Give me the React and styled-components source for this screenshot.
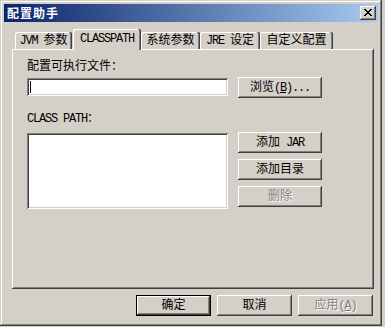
import React from "react";
import styled, { createGlobalStyle } from "styled-components";

const FACE = "#D4D0C8";
const RAISED = `inset -1px -1px #404040, inset 1px 1px #ffffff, inset -2px -2px #808080, inset 2px 2px ${FACE}`;
const SUNKEN = `inset 1px 1px #808080, inset -1px -1px #ffffff, inset 2px 2px #404040, inset -2px -2px ${FACE}`;

const Global = createGlobalStyle`
  html, body { margin: 0; padding: 0; background: ${FACE}; }
  body {
    font-family: "Liberation Mono", "Noto Sans CJK SC", monospace;
    font-size: 12px;
    color: #000;
  }
  * { box-sizing: border-box; }
`;

const Window = styled.div`
  width: 382px;
  height: 326px;
  padding: 4px;
  background: ${FACE};
  display: flex;
  flex-direction: column;
  box-shadow: inset -1px -1px #404040, inset 1px 1px ${FACE}, inset -2px -2px #808080, inset 2px 2px #ffffff;
`;

const TitleBar = styled.div`
  flex: none;
  height: 18px;
  display: flex;
  align-items: center;
  justify-content: space-between;
  padding: 0 2px 0 3px;
  background: linear-gradient(to right, #0a246a, #a6caf0);
`;

const Title = styled.span`
  color: #fff;
  font-family: "Noto Sans CJK SC", sans-serif;
  font-weight: bold;
  font-size: 12px;
  letter-spacing: 1px;
  line-height: 18px;
`;

const CloseButton = styled.div`
  width: 16px;
  height: 14px;
  background: ${FACE};
  box-shadow: ${RAISED};
  display: flex;
  align-items: center;
  justify-content: center;
  padding: 0 1px 1px 0;
`;

const Body = styled.div`
  flex: 1;
  display: flex;
  flex-direction: column;
  padding: 7px 4px 0 8px;
`;

const TabStrip = styled.div`
  flex: none;
  height: 20px;
  display: flex;
  align-items: flex-end;
  padding-left: 3px;
`;

const Tab = styled.div`
  width: ${(p) => p.$w}px;
  height: ${(p) => (p.$active ? 21 : 17)}px;
  margin-left: ${(p) => p.$ml || 0}px;
  margin-bottom: ${(p) => (p.$active ? -1 : 0)}px;
  padding-bottom: ${(p) => (p.$active ? 2 : 0)}px;
  position: relative;
  z-index: ${(p) => (p.$active ? 1 : 0)};
  background: ${FACE};
  display: flex;
  align-items: center;
  justify-content: center;
  line-height: 12px;
  white-space: pre;
  border-top-left-radius: 2px;
  border-top-right-radius: 2px;
  box-shadow: inset -1px 0 #404040, inset -2px 0 #808080, inset 1px 1px #ffffff;
`;

const Panel = styled.div`
  flex: none;
  height: 240px;
  padding: 12px 0 0 15px;
  display: flex;
  flex-direction: column;
  box-shadow: inset -1px -1px #404040, inset 1px 1px #ffffff, inset -2px -2px #808080;
`;

const Label = styled.div`
  line-height: 12px;
  height: 12px;
  margin-top: ${(p) => p.$mt || 0}px;
  white-space: pre;
`;

const Row = styled.div`
  display: flex;
  align-items: flex-start;
  gap: 10px;
  margin-top: ${(p) => p.$mt || 0}px;
`;

const TextField = styled.div`
  width: 201px;
  height: 18px;
  margin-top: 1px;
  background: #fff;
  box-shadow: ${SUNKEN};
  display: flex;
  align-items: center;
  padding-left: 3px;
`;

const Caret = styled.span`
  width: 1px;
  height: 12px;
  background: #000;
`;

const ListBox = styled.div`
  width: 201px;
  height: 76px;
  margin-top: 1px;
  background: #fff;
  box-shadow: ${SUNKEN};
`;

const ButtonColumn = styled.div`
  display: flex;
  flex-direction: column;
  gap: 6px;
`;

const Button = styled.div`
  width: ${(p) => p.$w}px;
  height: 21px;
  background: ${FACE};
  display: flex;
  align-items: center;
  justify-content: center;
  line-height: 12px;
  white-space: pre;
  color: ${(p) => (p.$disabled ? "#808080" : "#000")};
  text-shadow: ${(p) => (p.$disabled ? "1px 1px 0 #ffffff" : "none")};
  box-shadow: ${(p) =>
    p.$default
      ? `inset 0 0 0 1px #000, inset -2px -2px #404040, inset 2px 2px #ffffff, inset -3px -3px #808080, inset 3px 3px ${FACE}`
      : RAISED};
`;

const ButtonRow = styled.div`
  display: flex;
  justify-content: flex-end;
  gap: 6px;
  margin-top: 6px;
  padding-right: 1px;
`;

const Latin = styled.span`
  font-family: "Liberation Mono", monospace;
  font-size: 12px;
  letter-spacing: -1.2px;
`;

const Key = styled.span`
  text-decoration: underline;
`;

const CloseGlyph = () => (
  <svg width="8" height="7" viewBox="0 0 8 7" shapeRendering="crispEdges">
    <path
      fill="#000"
      d="M0 0h2v1h-2zM6 0h2v1h-2zM1 1h2v1h-2zM5 1h2v1h-2zM2 2h4v1h-4zM3 3h2v1h-2zM2 4h4v1h-4zM1 5h2v1h-2zM5 5h2v1h-2zM0 6h2v1h-2zM6 6h2v1h-2z"
    />
  </svg>
);

const tabs = [
  { key: "jvm", w: 57, ml: 0, label: <><Latin>{"JVM "}</Latin>参数</> },
  { key: "cp", w: 68, ml: 1, active: true, label: <Latin>CLASSPATH</Latin> },
  { key: "sys", w: 59, ml: 0, label: "系统参数" },
  { key: "jre", w: 60, ml: 0, label: <><Latin>{"JRE "}</Latin>设定</> },
  { key: "custom", w: 73, ml: 0, label: "自定义配置" },
];

export default function App() {
  return (
    <>
      <Global />
      <Window>
        <TitleBar>
          <Title>配置助手</Title>
          <CloseButton>
            <CloseGlyph />
          </CloseButton>
        </TitleBar>
        <Body>
          <TabStrip>
            {tabs.map((t) => (
              <Tab key={t.key} $w={t.w} $ml={t.ml} $active={t.active}>
                {t.label}
              </Tab>
            ))}
          </TabStrip>
          <Panel>
            <Label>配置可执行文件：</Label>
            <Row $mt={4}>
              <TextField>
                <Caret />
              </TextField>
              <Button $w={84}>
                浏览<Latin>(<Key>B</Key>)...</Latin>
              </Button>
            </Row>
            <Label $mt={15}>
              <Latin>CLASS PATH</Latin>：
            </Label>
            <Row $mt={7}>
              <ListBox />
              <ButtonColumn>
                <Button $w={84}>
                  添加<Latin>{" JAR"}</Latin>
                </Button>
                <Button $w={84}>添加目录</Button>
                <Button $w={84} $disabled>
                  删除
                </Button>
              </ButtonColumn>
            </Row>
          </Panel>
          <ButtonRow>
            <Button $w={75} $default>
              确定
            </Button>
            <Button $w={75}>取消</Button>
            <Button $w={75} $disabled>
              应用<Latin>(<Key>A</Key>)</Latin>
            </Button>
          </ButtonRow>
        </Body>
      </Window>
    </>
  );
}
